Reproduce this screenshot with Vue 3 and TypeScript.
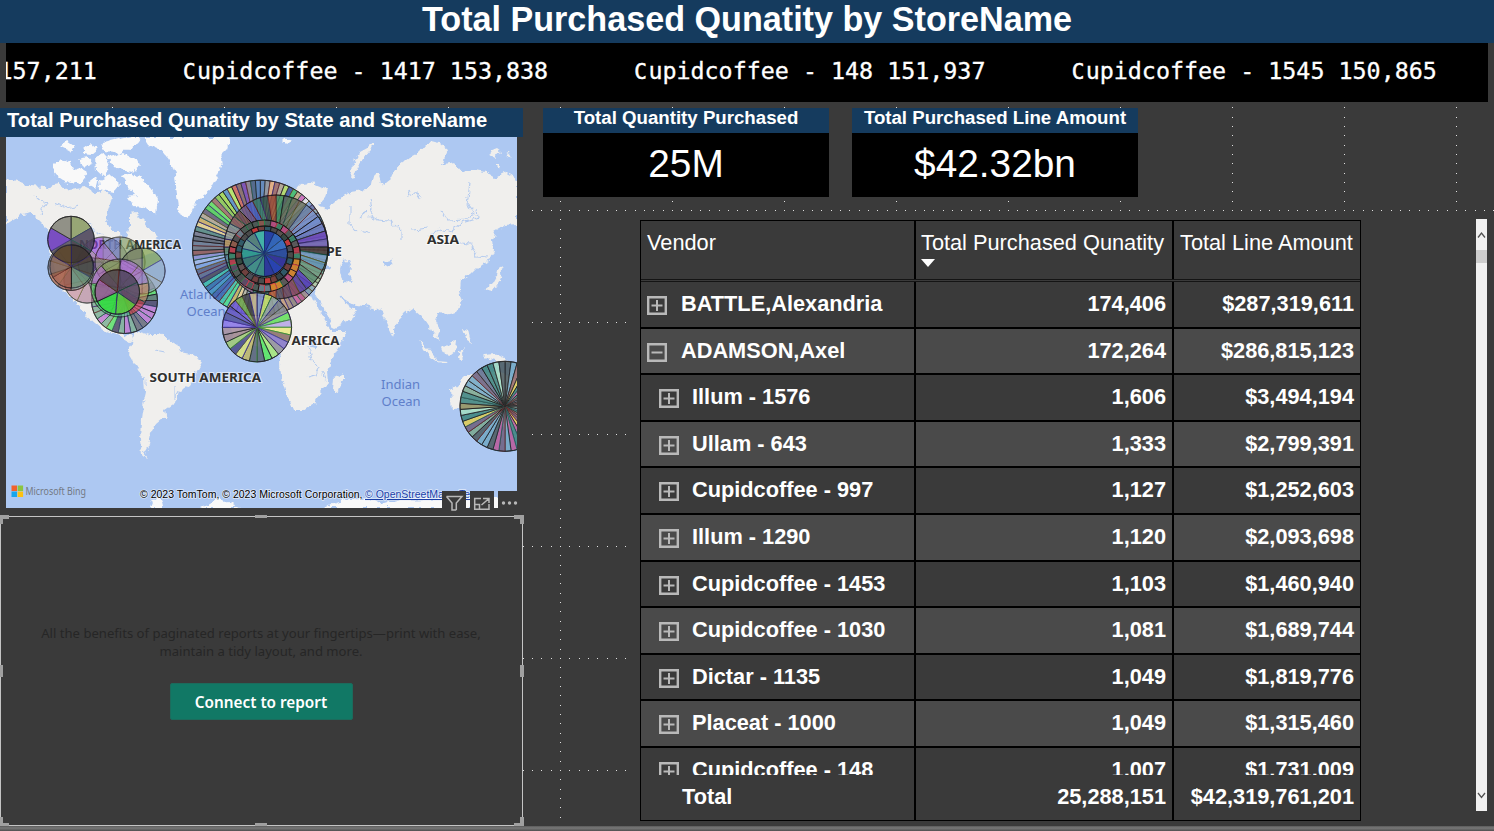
<script setup lang="ts">
interface Wedge { d: string; fill: string; stroke: string }
interface Pie { cx: number; cy: number; r: number; inner: number; opacity: number; wedges: Wedge[] }
interface Row { name: string; qty: string; amount: string; child: boolean; open: boolean }

const ticker = [
  { initial: '', rest: '157,211' },
  { initial: 'C', rest: 'upidcoffee - 1417 153,838' },
  { initial: 'C', rest: 'upidcoffee - 148 151,937' },
  { initial: 'C', rest: 'upidcoffee - 1545 150,865' },
]

const cards = [
  { title: 'Total Quantity Purchased', value: '25M' },
  { title: 'Total Purchased Line Amount', value: '$42.32bn' },
]

const row = (name: string, qty: string, amount: string, child = true, open = false): Row => ({ name, qty, amount, child, open })
const rows: Row[] = [
  row('BATTLE,Alexandria', '174,406', '$287,319,611', false),
  row('ADAMSON,Axel', '172,264', '$286,815,123', false, true),
  row('Illum - 1576', '1,606', '$3,494,194'),
  row('Ullam - 643', '1,333', '$2,799,391'),
  row('Cupidcoffee - 997', '1,127', '$1,252,603'),
  row('Illum - 1290', '1,120', '$2,093,698'),
  row('Cupidcoffee - 1453', '1,103', '$1,460,940'),
  row('Cupidcoffee - 1030', '1,081', '$1,689,744'),
  row('Dictar - 1135', '1,049', '$1,819,776'),
  row('Placeat - 1000', '1,049', '$1,315,460'),
  row('Cupidcoffee - 148', '1,007', '$1,731,009'),
]

// Snap grid: lines every 112px, one dot every 28/3 px along each line
const dots: { x: number; y: number }[] = []
const step = 28 / 3
for (let k = 0; k < 161; k++)
  for (let y = 210; y < 826; y += 112) dots.push({ x: Math.round(k * step), y })
for (let k = 0; k < 78; k++)
  for (let x = 112; x < 1490; x += 112) dots.push({ x, y: Math.round(98 + k * step) })

const muted = ['#8d8f96', '#5d7fae', '#7c5f64', '#5aa79a', '#9aa17a', '#6d5f8c', '#44566b', '#a2785e', '#5a5a5e', '#8f86bb', '#5a5a5e', '#96606e', '#9db0cf', '#7d8794']

function pie(cx: number, cy: number, r: number, count: number, fills: string[], opacity = 0.8, inner = 0, turn = 0, strokes = ['#111', '#1c2a55', '#5c1717', '#000', '#124d3a', '#222', '#5a4a12', '#2b1a6a']): Pie {
  let seed = Math.round(cx * 31 + cy * 17 + r * 7 + inner)
  const next = () => {
    seed = (seed + 0x6d2b79f5) | 0
    let t = Math.imul(seed ^ (seed >>> 15), 1 | seed)
    t = (t + Math.imul(t ^ (t >>> 7), 61 | t)) ^ t
    return ((t ^ (t >>> 14)) >>> 0) / 4294967296
  }
  const pt = (a: number, q: number) => `${(cx + q * Math.sin(a)).toFixed(2)} ${(cy - q * Math.cos(a)).toFixed(2)}`
  const ordered = count === fills.length
  const wedges: Wedge[] = []
  for (let i = 0; i < count; i++) {
    const a = turn + (i / count) * Math.PI * 2
    const b = turn + ((i + 1) / count) * Math.PI * 2
    const fill = ordered ? fills[i] : fills[Math.floor(next() * fills.length)]
    const stroke = strokes[Math.floor(next() * strokes.length)]
    const d = inner
      ? `M${pt(a, inner)}L${pt(a, r)}A${r} ${r} 0 0 1 ${pt(b, r)}L${pt(b, inner)}A${inner} ${inner} 0 0 0 ${pt(a, inner)}Z`
      : `M${cx} ${cy}L${pt(a, r)}A${r} ${r} 0 0 1 ${pt(b, r)}Z`
    wedges.push({ d, fill, stroke })
  }
  return { cx, cy, r, inner, opacity, wedges }
}

// Wedge colours listed clockwise from twelve o'clock
const outerEurope = [
  '#5d83b5', '#8f9298', '#e8ad78', '#a06a62', '#b3a58e', '#b5dc62', '#3f559c', '#38b86a', '#b8a57c', '#c765b8', '#dcdce8', '#7a9bd0', '#5f6aa0', '#88a8b8', '#6a8ac0', '#5a6ab0', '#8a70c0', '#7a58b8', '#5a6a80', '#6a88a0', '#5d7c70', '#4f8a78', '#55a090',
  '#6aa898', '#4fa088', '#508a80', '#6ab09a', '#8ab8a0', '#9ab890', '#b0c8a0', '#8aa8b0', '#7a98a8', '#9a8888', '#b04f88', '#c05a98', '#8a8078', '#a08878', '#c09a78', '#7ab8e0', '#5aa8d8', '#4a6aa0', '#5a70b0', '#3a5aa0', '#3a9a80',
  '#5a8a8a', '#4a5a7a', '#8a9ab8', '#b0b0a0', '#e0c890', '#c8b058', '#4adc8a', '#3fc0a8', '#3a6ab0', '#3a5fa8', '#3f8fc0', '#2f70a8', '#3ab8a8', '#4a4a5a', '#5a6a8a', '#56648a', '#7aa0e0', '#a0b8e8', '#8a8fd0', '#905a58', '#6f7480', '#6a7a90', '#5f6470', '#78788a', '#5a8a80', '#e8d088',
  '#d0b060', '#b8a890', '#6a6078', '#58d058', '#68e060', '#a07068', '#90c850', '#a8d850', '#5a90c0', '#b8e860', '#d06858', '#8a6a60', '#7a48b0', '#8a7f8a', '#4a5f80', '#4f78b0',
]
const innerEurope = [
  '#3f8a60', '#5a685a', '#5d6a55', '#66705f', '#7088a8', '#7a90c8', '#7590d0', '#6a80c0', '#7048c0', '#7a68c0', '#4f3838', '#7a9ac8', '#6a98b8', '#6f9a80', '#5a8a70', '#5038b8', '#5a40a0', '#804a60', '#6a4a60', '#555060',
  '#c05a30', '#408a68', '#489080', '#8a6890', '#7a6a88', '#586878', '#c04f70', '#4aa078', '#588898', '#609078', '#c0a068', '#909a98', '#8a8f98', '#8a5a60', '#704850', '#6a5a8a', '#4a60c0', '#3a7868', '#2f4f48', '#9a5038',
]
const disc = ['#2743a5', '#3367bb', '#3a6fc2', '#2e4f9f', '#35369c', '#2843b3', '#2d399b', '#3b8b83', '#438f89', '#3b7775', '#329a91', '#6a9791', '#56827c', '#43b4a8']

const pies: Pie[] = [
  // North America
  pie(124.5, 300.5, 33, 32, ['#4c4667', '#5de06a', '#c07bd0', '#7fb095', '#3ccbc0', '#5a7a6a', '#9b80a8', '#d78bd0', '#6f6f78'], 0.85),
  pie(87, 280, 23, 7, ['#8f94a5', '#6a7f9a', '#8a7c95', '#b58aa0', '#c58fa0', '#4f9bc8', '#8596a8'], 0.7),
  pie(103, 262, 25, 8, ['#8187a8', '#8f92a0', '#8187a8', '#7d8f98', '#8d8c98', '#8b4fd6', '#8a5aa0', '#8b3fd6'], 0.65),
  pie(120, 262, 25, 9, ['#7f9a62', '#4c5b3a', '#a88cc8', '#b68bd0', '#9d9bb5', '#9a8b6a', '#8b8c70', '#9a6fc8', '#6e7cc0'], 0.65),
  pie(142, 271, 23, 6, ['#7da04a', '#8fa8c2', '#98a8b5', '#a8a0b5', '#b085c2', '#7d8a68'], 0.7),
  pie(120, 288, 29, 9, ['#a46bd0', '#a879c8', '#c8895d', '#d03f3f', '#5bc090', '#41d86d', '#4cd05a', '#b66fd0', '#809a55'], 0.6),
  pie(71, 267.5, 23, 10, ['#6f755d', '#5f5547', '#54806d', '#69997d', '#82a599', '#a3574c', '#c26c4c', '#8796a5', '#7b8395', '#8e6a3a'], 0.75),
  pie(71, 239.5, 23.2, 6, ['#8b9d65', '#4b4358', '#3c3542', '#57515a', '#6a38bd', '#858579'], 0.88),
  pie(71.5, 266.5, 21.5, 6, ['#42382f', '#443a34', '#6b8b70', '#a0604f', '#805440', '#5c421f'], 0.68),
  pie(117.3, 292, 22.2, 6, ['#51475f', '#5a4d6b', '#58c93b', '#36dc42', '#985d98', '#52484e'], 0.88, 0, 0.08),
  // Europe
  pie(260.3, 248, 67.8, outerEurope.length, outerEurope, 0.88),
  pie(276, 247, 52, innerEurope.length, innerEurope, 0.84),
  pie(264.5, 256, 36, 34, ['#4c5a55', '#b83c4c', '#3b8266', '#8a574a', '#5a4964', '#397d88', '#d4872c', '#4d4a4c', '#b44e82', '#5a5a58', '#6a7a88'], 0.94, 29, 0, ['#111', '#1f8f50', '#d8344a', '#222', '#000']),
  pie(264.5, 255, 29, 26, ['#5c5250', '#31434b', '#2e5968', '#713f3c', '#35473f', '#4a4d55', '#c83a3a', '#4a4a4a'], 0.95, 23, 0, ['#090909', '#1c1c1c']),
  pie(264.5, 253.5, 23, disc.length, disc, 0.98, 0, 0, ['#182d72', '#2a4a66']),
  pie(257, 327.3, 34.6, 28, [
    '#8a9ad0', '#c9e36a', '#9aa8a0', '#7f7f86', '#8a8a90', '#65e05c', '#b8a8e8', '#eaea86', '#8b6f6a', '#8677c9', '#90909a', '#a8e87a', '#58e860', '#5a6878',
    '#5a6478', '#c0b868', '#d8e07a', '#4a4a8a', '#a0c878', '#a08890', '#a890a0', '#8a78e8', '#4a50a0', '#5a50c0', '#6a58d8', '#70a850', '#46464d', '#c8b890',
  ], 0.88, 0, 0, ['#111', '#2b1a8a', '#4a4a20', '#26801f', '#111']),
  // Australia
  pie(505, 406.3, 45, 46, ['#c87f68', '#3e8580', '#9a6a6a', '#73a9c6', '#6e6282', '#b95b9c', '#dfcc55', '#4d5d62', '#7ca992', '#a38ab5', '#8e8f60', '#8b7269', '#a2dcc4', '#62708f'], 0.88, 0, 0, ['#111', '#000', '#5c1717', '#124d4a', '#111']),
]

const land = [
  'M6 181L14 180 30 186 45 187 58 184 70 190 85 188 95 193 105 190 112 198 108 210 106 222 112 232 120 232 122 240 127 238 130 225 130 215 137 214 145 222 152 232 158 238 150 243 158 246 155 252 145 256 138 262 130 275 122 285 120 300 115 292 100 297 100 310 106 318 115 314 116 322 125 335 133 337 130 342 118 335 100 328 88 318 75 300 62 290 55 270 50 250 48 228 40 220 33 213 22 215 6 225Z',
  'M131 345L133 333 140 331 150 334 160 334 168 339 177 345 180 352 190 354 198 357 203 363 198 372 190 385 180 392 177 402 165 410 166 416 155 425 150 435 148 445 144 452 149 458 142 455 140 440 141 420 143 405 146 392 145 378 135 365 128 353Z',
  'M288 200L290 195 300 184 312 183 328 190 325 198 318 206 328 208 335 202 343 195 350 192 365 190 372 185 375 172 380 172 384 185 390 180 392 175 398 165 408 158 420 152 430 140 438 142 448 150 442 165 455 163 462 172 475 170 485 172 495 178 505 173 517 180 517 225 505 226 495 232 493 240 494 250 490 260 480 265 470 275 460 280 459 290 462 302 455 312 445 314 438 313 436 320 441 330 438 340 432 333 428 325 420 315 412 308 405 313 395 325 392 335 387 325 382 312 375 308 358 305 352 304 341 297 345 304 357 310 350 320 333 328 326 313 315 292 318 284 300 280 280 282 262 278 245 284 236 284 238 270 255 265 250 252 262 240 275 234 280 215Z',
  'M225 315L235 298 245 290 262 285 285 290 300 293 313 297 322 316 332 331 346 331 340 346 330 362 327 372 328 382 320 392 315 402 303 410 293 410 287 395 282 378 281 360 275 350 268 345 250 346 235 338Z',
  'M343 371L343 380 338 392 333 390 334 378 340 375Z',
  'M350 179L352 165 360 151 373 144 370 151 358 165 354 178Z',
  'M420 341L427 347 434 355 437 361 430 356 423 348ZM443 349L451 341 457 340 456 351 451 355 445 354ZM437 361L448 362 447 364 437 363ZM460 351L467 349 462 355 463 362 459 358ZM462 328L468 330 471 343 466 340Z',
  'M484 354L495 353 505 358 512 365 500 362 489 359Z',
  'M451 390L458 384 466 376 480 370 490 373 500 370 517 382 517 430 505 428 485 412 466 410 453 411Z',
  'M485 289L492 284 497 275 499 266 504 269 499 281 492 291ZM100 318L114 322 125 325 114 319Z',
  'M489 153L496 150 500 153 496 158ZM505 154L509 153 511 157ZM495 165L500 165 499 169Z',
]
const ice = [
  'M145 137L150 145 162 150 170 160 175 175 177 195 180 215 187 219 192 208 200 198 210 190 218 175 222 165 220 155 227 148 230 137Z',
  'M60 147L68 140 75 145 70 152ZM82 149L90 143 98 150 92 155 84 154ZM102 142L118 138 128 145 121 153 105 151ZM95 157L104 154 109 165 104 177 96 170ZM53 167L61 159 71 162 74 170 80 168 88 173 81 182 68 184 56 176ZM107 158L123 153 141 163 134 171 116 169ZM99 179L110 174 121 183 113 192 100 189ZM121 176L133 172 144 181 152 190 157 201 155 214 145 207 133 206 127 197 136 196 127 186ZM115 141L133 137 140 137 131 149 118 148ZM78 160L88 158 92 163 84 166ZM92 178L98 180 97 188 90 186Z',
  'M286 137L292 141 287 144 283 140Z',
  'M209 504L215 500 226 502 239 508 201 508ZM150 508L153 500 160 495 163 508ZM325 508L335 502 350 499 375 500 383 505 400 500 430 499 517 496 517 508Z',
]
const water = [
  'M343 262L348 261 351 268 349 275 352 283 344 282 341 270Z',
  'M310 264L322 261 332 268 322 272 311 270Z',
  'M383 262L391 260 393 264 385 267Z',
  'M312 341L317 342 315 348 311 347Z',
]
const rivers = 'M370 198L372 210 370 216 378 220 390 221 402 231 402 240M411 190L408 195 416 193 420 199M470 182L467 205 475 215 465 219 448 220 441 211M477 209L478 218 462 223 451 232 440 229 428 237M350 205L350 225 355 231M460 243L470 244 477 257 488 258M308 347L311 360 319 367 315 375 308 377M322 372L325 380M155 350L165 352M180 390L174 398 174 385M55 203L66 208 80 205M78 220L92 224 90 230 105 234M35 196L45 205 40 213M413 230L428 228M361 231L370 234M366 213L360 218'
</script>

<template>
  <div class="report">
    <svg class="snap-grid" width="1494" height="831" shape-rendering="crispEdges">
      <rect v-for="(p, i) in dots" :key="i" :x="p.x" :y="p.y" width="1" height="1" fill="#e0e0e0" />
    </svg>

    <header class="title">Total Purchased Qunatity by StoreName</header>

    <div class="ticker">
      <span v-for="(t, i) in ticker" :key="i"><span class="initial" v-if="t.initial">{{ t.initial }}</span>{{ t.rest }}</span>
    </div>

    <main class="canvas">
      <section class="left">
        <div class="map-card">
          <h2>Total Purchased Qunatity by State and StoreName</h2>
          <div class="map-frame">
            <svg class="map" viewBox="6 137 511 371" width="511" height="371">
              <defs>
                <filter id="coast" x="-5%" y="-5%" width="110%" height="110%">
                  <feTurbulence type="fractalNoise" baseFrequency="0.13" numOctaves="3" seed="4" />
                  <feDisplacementMap in="SourceGraphic" scale="8" xChannelSelector="R" yChannelSelector="G" />
                  <feGaussianBlur stdDeviation="0.35" />
                </filter>
              </defs>
              <rect x="6" y="137" width="511" height="371" fill="#adc8f2" />
              <g filter="url(#coast)">
                <path v-for="(d, i) in land" :key="'l' + i" :d="d" fill="#f0efed" />
                <path v-for="(d, i) in ice" :key="'i' + i" :d="d" fill="#f9f9f9" />
                <path v-for="(d, i) in water" :key="'w' + i" :d="d" fill="#adc8f2" />
                <path :d="rivers" fill="none" stroke="#b4cbef" stroke-width="1.1" />
              </g>
              <g class="continent">
                <text x="79" y="248.500" textLength="102" lengthAdjust="spacingAndGlyphs">NORTH AMERICA</text>
                <text x="290" y="256" textLength="52" lengthAdjust="spacingAndGlyphs">EUROPE</text>
                <text x="427" y="244" textLength="32" lengthAdjust="spacingAndGlyphs">ASIA</text>
                <text x="291.500" y="344.500" textLength="48" lengthAdjust="spacingAndGlyphs">AFRICA</text>
                <text x="149.500" y="382" textLength="111.500" lengthAdjust="spacingAndGlyphs">SOUTH AMERICA</text>
              </g>
              <g class="ocean">
                <text x="180" y="299">Atlantic</text>
                <text x="186.500" y="315.500">Ocean</text>
                <text x="381" y="389">Indian</text>
                <text x="381.500" y="405.500">Ocean</text>
              </g>
              <g v-for="(p, i) in pies" :key="'p' + i" :opacity="p.opacity">
                <path v-for="(w, j) in p.wedges" :key="j" :d="w.d" :fill="w.fill" :stroke="w.stroke" stroke-width="0.9" />
                <circle :cx="p.cx" :cy="p.cy" :r="p.r" fill="none" stroke="#151515" stroke-width="1" />
              </g>
              <g>
                <rect x="11.500" y="485.500" width="5.500" height="5.500" fill="#f1622c" />
                <rect x="17.600" y="485.500" width="5.500" height="5.500" fill="#8bc540" />
                <rect x="11.500" y="491.500" width="5.500" height="5.500" fill="#18a6ec" />
                <rect x="17.600" y="491.500" width="5.500" height="5.500" fill="#fdc110" />
                <text class="bing" x="25.500" y="495" textLength="60.500" lengthAdjust="spacingAndGlyphs">Microsoft Bing</text>
              </g>
              <g class="credit">
                <text x="140" y="498" textLength="222.500">© 2023 TomTom, © 2023 Microsoft Corporation,</text>
                <text class="link" x="365" y="498">© OpenStreetMap</text>
                <text class="link" x="459" y="498">Terms</text>
              </g>
            </svg>
            <div class="tools">
              <span><svg width="24" height="20" viewBox="0 0 24 20"><path d="M4.500 5.500H20L14.300 12V19M4.500 5.500L10 12V19H14.300" fill="none" stroke="#b8b8b8" stroke-width="1.500" /></svg></span>
              <span><svg width="24" height="20" viewBox="0 0 24 20"><path d="M11 7.500H4.700V18.300H19V13M13 7.500H19V12M4.700 13.500H9.500V18.300M11.500 14L19 7.500" fill="none" stroke="#b8b8b8" stroke-width="1.500" /></svg></span>
              <span><svg width="24" height="20" viewBox="0 0 24 20" fill="#b8b8b8"><circle cx="5.500" cy="12" r="1.700" /><circle cx="11.500" cy="12" r="1.700" /><circle cx="17.500" cy="12" r="1.700" /></svg></span>
            </div>
          </div>
        </div>

        <div class="paginated">
          <svg class="handles" width="524" height="312" fill="none">
            <path d="M0.500 1.500H522.500V310.500H0.500Z" stroke="#c4c4c4" />
            <g fill="#a0a0a0">
              <path d="M0 0H9V4H3V9H0ZM524 0H514V4H520V9H524ZM0 311H9V308H3V302H0ZM524 311H514V308H520V302H524Z" />
              <path d="M255 0H267V3H255ZM255 308H267V311H255ZM0 150H3V162H0ZM520 150H524V162H520Z" />
            </g>
          </svg>
          <p>All the benefits of paginated reports at your fingertips—print with ease,<br />maintain a tidy layout, and more.</p>
          <button>Connect to report</button>
        </div>
      </section>

      <section class="right">
        <div class="cards">
          <article v-for="c in cards" :key="c.title" class="card">
            <h3>{{ c.title }}</h3>
            <div class="value">{{ c.value }}</div>
          </article>
        </div>

        <div class="matrix">
          <div class="grid">
            <div class="line head">
              <div>Vendor</div>
              <div>Total Purchased Qunatity<i class="sort" /></div>
              <div>Total Line Amount</div>
            </div>
            <div class="body">
              <div v-for="r in rows" :key="r.name" class="line" :class="{ child: r.child }">
                <div>
                  <svg width="20" height="19" viewBox="0 0 20 19" fill="none" stroke="#b9b9b9" stroke-width="2.400">
                    <path d="M1.200 1.200H18.800V17.800H1.200Z" />
                    <path d="M4.500 9.500H15.500" stroke-width="2" />
                    <path v-if="!r.open" d="M10 4V15" stroke-width="2" />
                  </svg>{{ r.name }}
                </div>
                <div>{{ r.qty }}</div>
                <div>{{ r.amount }}</div>
              </div>
            </div>
            <div class="line total">
              <div>Total</div>
              <div>25,288,151</div>
              <div>$42,319,761,201</div>
            </div>
          </div>
          <div class="scroll">
            <svg width="11" height="31" viewBox="0 0 11 31"><path d="M2 18.500L5.500 14 9 18.500" fill="none" stroke="#505050" stroke-width="1.300" /></svg>
            <div class="thumb" />
            <div class="track" />
            <svg width="11" height="31" viewBox="0 0 11 31"><path d="M2 13L5.500 17.500 9 13" fill="none" stroke="#505050" stroke-width="1.300" /></svg>
          </div>
        </div>
      </section>
    </main>
    <footer class="edge" />
  </div>
</template>

<style>
body {
  margin: 0;
  background: #3a3a3a;
  overflow: hidden;
}
</style>

<style scoped>
.report {
  position: relative;
  width: 1494px;
  height: 831px;
  box-sizing: border-box;
  display: flex;
  flex-direction: column;
  overflow: hidden;
  background: #3a3a3a;
  color: #fff;
  font-family: "Liberation Sans", Arial, sans-serif;
}
.snap-grid {
  position: absolute;
  inset: 0;
}
.title {
  position: relative;
  height: 43px;
  flex: none;
  background: #153b5e;
  text-align: center;
  font-size: 34.150px;
  font-weight: bold;
  line-height: 39px;
}
.ticker {
  position: relative;
  height: 59px;
  flex: none;
  margin: 0 6px;
  background: #000;
  display: flex;
  gap: 86.200px;
  overflow: hidden;
  white-space: pre;
  font-family: "DejaVu Sans Mono", monospace;
  font-size: 23.330px;
  line-height: 57px;
  -webkit-text-stroke: 0.300px #fff;
}
.ticker > span:first-child {
  margin-left: -7.500px;
}
.initial {
  display: inline-block;
  width: 14.045px;
  font-size: 21px;
  line-height: 1;
  -webkit-text-stroke: 0.500px #fff;
}
.canvas {
  position: relative;
  flex: none;
  height: 724px;
  display: flex;
}
.left {
  width: 524px;
  padding-top: 6px;
  display: flex;
  flex-direction: column;
}
h2,
h3,
p {
  margin: 0;
}
.map-card h2 {
  width: 516px;
  height: 29px;
  padding-left: 7px;
  background: #153b5e;
  font-size: 20.170px;
  line-height: 25px;
  white-space: nowrap;
}
.map-card {
  height: 407px;
  background: #3a3a3a;
}
.map-frame {
  position: relative;
  width: 511px;
  height: 371px;
  margin-left: 6px;
}
.map {
  display: block;
}
.continent {
  font: bold 13px "Noto Sans", "Open Sans", sans-serif;
  fill: #303030;
  stroke: #fff;
  stroke-opacity: 0.6;
  stroke-width: 2px;
  paint-order: stroke;
}
.ocean {
  font: 13px "Noto Sans", "Open Sans", sans-serif;
  fill: #5f7fca;
}
.bing {
  font: 10px "Noto Sans", "Open Sans", sans-serif;
  fill: #737983;
}
.credit {
  font: 10.500px "Liberation Sans", Arial, sans-serif;
  fill: #000;
  stroke: #fff;
  stroke-opacity: 0.6;
  stroke-width: 1.500px;
  paint-order: stroke;
}
.link {
  fill: #1a3fa8;
  text-decoration: underline;
}
.tools {
  position: absolute;
  left: 436px;
  top: 354px;
  display: flex;
  gap: 4px;
}
.tools span {
  width: 24px;
  height: 20px;
  background: #3a3a3a;
}
.tools svg {
  display: block;
}
.paginated {
  position: relative;
  width: 522px;
  height: 311px;
  background: #3a3a3a;
  display: flex;
  flex-direction: column;
  align-items: center;
  font-family: "Noto Sans", "Open Sans", sans-serif;
}
.handles {
  position: absolute;
  left: 0;
  top: 0;
}
.paginated p {
  margin-top: 109px;
  color: #262626;
  font-size: 13.100px;
  line-height: 18px;
  text-align: center;
  white-space: nowrap;
}
.paginated button {
  margin-top: 23px;
  width: 183px;
  height: 37px;
  padding: 0;
  border: 1px solid #1c6b5c;
  border-radius: 2px;
  background: #117865;
  color: #fff;
  font: 600 15.300px "Noto Sans", "Open Sans", sans-serif;
}
.right {
  flex: 1;
  display: flex;
  flex-direction: column;
}
.cards {
  display: flex;
  gap: 23px;
  padding: 6px 0 0 19px;
}
.card {
  width: 286px;
  height: 89px;
  background: #000;
  text-align: center;
}
.card h3 {
  height: 25px;
  background: #153b5e;
  font-size: 18.670px;
  line-height: 19px;
}
.value {
  font-size: 38.800px;
  line-height: 61px;
}
.matrix {
  margin: 18px 0 0 108px;
  padding: 4px 0 0 8px;
  flex: 1;
  min-height: 0;
  display: flex;
  background: #3a3a3a;
}
.grid {
  width: 721px;
  height: 601px;
  margin-top: 1px;
  border: 1px solid #000;
  box-sizing: border-box;
  display: flex;
  flex-direction: column;
  font-size: 21.750px;
  font-weight: bold;
}
.line {
  display: grid;
  grid-template-columns: 275px 257px 185px;
  column-gap: 1px;
  flex: none;
}
.line > div {
  border-right: 2px solid #000;
  padding-right: 6px;
  text-align: right;
  line-height: 43px;
  white-space: nowrap;
}
.line > div:last-child {
  border-right: 0;
  padding-right: 6px;
}
.line > div:first-child {
  text-align: left;
  padding-left: 6px;
}
.head {
  height: 58px;
  border-bottom: 1px solid #141414;
  font-weight: normal;
}
.head > div {
  text-align: left;
  padding-left: 4px;
  padding-right: 0;
}
.head > div:last-child {
  padding-left: 5px;
}
.sort {
  display: block;
  width: 0;
  border: 7.500px solid transparent;
  border-top: 8px solid #fff;
  border-bottom: 0;
  margin-top: -5px;
}
.body {
  height: 493px;
  margin-top: 1px;
  border-top: 1px solid #141414;
  overflow: hidden;
  flex: none;
}
.body .line {
  box-sizing: border-box;
  height: 46.600px;
  border-bottom: 2px solid #000;
}
.body .line:nth-child(even) {
  background: #4a4a4a;
}
.body svg {
  vertical-align: -4px;
  margin-right: 14px;
}
.body .child svg {
  margin-left: 12px;
  margin-right: 13px;
}
.total {
  flex: 1;
}
.total > div:first-child {
  padding-left: 41px;
}
.scroll {
  width: 11px;
  height: 592px;
  margin-left: 115px;
  background: #f0f0f0;
  display: flex;
  flex-direction: column;
}
.thumb {
  height: 13px;
  background: #cdcdcd;
}
.track {
  flex: 1;
}
.edge {
  position: relative;
  flex: 1;
  background: linear-gradient(#5a5a5a, #787878 40%, #505050);
}
</style>
